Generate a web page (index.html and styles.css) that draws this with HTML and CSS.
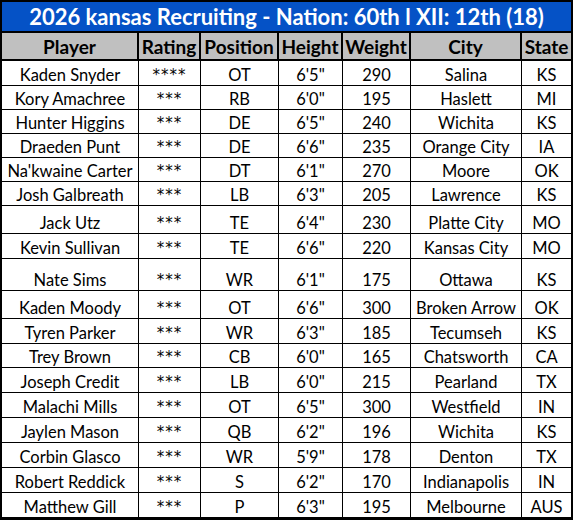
FILE: index.html
```html
<!DOCTYPE html>
<html>
<head>
<meta charset="utf-8">
<link rel="stylesheet" href="styles.css">
</head>
<body>
<div class="sheet">
  <div class="title">2026 kansas Recruiting - Nation: 60th l XII: 12th (18)</div>
  <div class="row head">
    <div class="c">Player</div><div class="c">Rating</div><div class="c">Position</div><div class="c">Height</div><div class="c">Weight</div><div class="c">City</div><div class="c">State</div>
  </div>
  <div class="row h25"><div class="c">Kaden Snyder</div><div class="c stars">****</div><div class="c">OT</div><div class="c">6'5"</div><div class="c">290</div><div class="c">Salina</div><div class="c">KS</div></div>
  <div class="row h24"><div class="c">Kory Amachree</div><div class="c stars">***</div><div class="c">RB</div><div class="c">6'0"</div><div class="c">195</div><div class="c">Haslett</div><div class="c">MI</div></div>
  <div class="row h24"><div class="c">Hunter Higgins</div><div class="c stars">***</div><div class="c">DE</div><div class="c">6'5"</div><div class="c">240</div><div class="c">Wichita</div><div class="c">KS</div></div>
  <div class="row h24"><div class="c">Draeden Punt</div><div class="c stars">***</div><div class="c">DE</div><div class="c">6'6"</div><div class="c">235</div><div class="c">Orange City</div><div class="c">IA</div></div>
  <div class="row h24"><div class="c">Na'kwaine Carter</div><div class="c stars">***</div><div class="c">DT</div><div class="c">6'1"</div><div class="c">270</div><div class="c">Moore</div><div class="c">OK</div></div>
  <div class="row h24"><div class="c">Josh Galbreath</div><div class="c stars">***</div><div class="c">LB</div><div class="c">6'3"</div><div class="c">205</div><div class="c">Lawrence</div><div class="c">KS</div></div>
  <div class="row h28"><div class="c">Jack Utz</div><div class="c stars">***</div><div class="c">TE</div><div class="c">6'4"</div><div class="c">230</div><div class="c">Platte City</div><div class="c">MO</div></div>
  <div class="row h25"><div class="c">Kevin Sullivan</div><div class="c stars">***</div><div class="c">TE</div><div class="c">6'6"</div><div class="c">220</div><div class="c">Kansas City</div><div class="c">MO</div></div>
  <div class="row h32"><div class="c">Nate Sims</div><div class="c stars">***</div><div class="c">WR</div><div class="c">6'1"</div><div class="c">175</div><div class="c">Ottawa</div><div class="c">KS</div></div>
  <div class="row h28"><div class="c">Kaden Moody</div><div class="c stars">***</div><div class="c">OT</div><div class="c">6'6"</div><div class="c">300</div><div class="c">Broken Arrow</div><div class="c">OK</div></div>
  <div class="row h25"><div class="c">Tyren Parker</div><div class="c stars">***</div><div class="c">WR</div><div class="c">6'3"</div><div class="c">185</div><div class="c">Tecumseh</div><div class="c">KS</div></div>
  <div class="row h24"><div class="c">Trey Brown</div><div class="c stars">***</div><div class="c">CB</div><div class="c">6'0"</div><div class="c">165</div><div class="c">Chatsworth</div><div class="c">CA</div></div>
  <div class="row h25"><div class="c">Joseph Credit</div><div class="c stars">***</div><div class="c">LB</div><div class="c">6'0"</div><div class="c">215</div><div class="c">Pearland</div><div class="c">TX</div></div>
  <div class="row h25"><div class="c">Malachi Mills</div><div class="c stars">***</div><div class="c">OT</div><div class="c">6'5"</div><div class="c">300</div><div class="c">Westfield</div><div class="c">IN</div></div>
  <div class="row h25"><div class="c">Jaylen Mason</div><div class="c stars">***</div><div class="c">QB</div><div class="c">6'2"</div><div class="c">196</div><div class="c">Wichita</div><div class="c">KS</div></div>
  <div class="row h25"><div class="c">Corbin Glasco</div><div class="c stars">***</div><div class="c">WR</div><div class="c">5'9"</div><div class="c">178</div><div class="c">Denton</div><div class="c">TX</div></div>
  <div class="row h25"><div class="c">Robert Reddick</div><div class="c stars">***</div><div class="c">S</div><div class="c">6'2"</div><div class="c">170</div><div class="c">Indianapolis</div><div class="c">IN</div></div>
  <div class="row h25"><div class="c">Matthew Gill</div><div class="c stars">***</div><div class="c">P</div><div class="c">6'3"</div><div class="c">195</div><div class="c">Melbourne</div><div class="c">AUS</div></div>
</div>
</body>
</html>
```

FILE: styles.css
```css
html, body {
  margin: 0;
  padding: 0;
  background: #ffffff;
}

.sheet {
  width: 573px;
  height: 520px;
  box-sizing: border-box;
  border: 2px solid #000;
  font-family: Lato, "Open Sans", sans-serif;
  color: #000;
  overflow: hidden;
}

.title {
  box-sizing: border-box;
  height: 31px;
  border-bottom: 2px solid #000;
  background: #0552c6;
  color: #fff;
  font-weight: bold;
  font-size: 22px;
  line-height: 28px;
  display: flex;
  align-items: center;
  justify-content: center;
  padding-top: 1px;
}

.row {
  display: grid;
  grid-template-columns: 137px 62px 78px 64px 68px 111px 49px;
  box-sizing: border-box;
}

.c {
  border-right: 1px solid #000;
  border-bottom: 1px solid #000;
  display: flex;
  align-items: flex-end;
  justify-content: center;
  padding-bottom: 0;
  font-size: 16.5px;
  line-height: 20px;
  white-space: nowrap;
  overflow: hidden;
}

.c:last-child {
  border-right: none;
}

.stars {
  font-family: "DejaVu Sans", sans-serif;
  font-size: 15px;
  letter-spacing: 1px;
  padding-bottom: 0;
}

.head {
  height: 28px;
  background: #c0c0c0;
}

.head .c {
  border-right-width: 2px;
  border-bottom-width: 2px;
  font-weight: bold;
  font-size: 19px;
  align-items: center;
  padding-bottom: 0;
  padding-top: 1px;
}

.head .c:last-child {
  border-right: none;
}

.h24 { height: 24px; }
.h25 { height: 25px; }
.h28 { height: 28px; }
.h32 { height: 32px; }
```
